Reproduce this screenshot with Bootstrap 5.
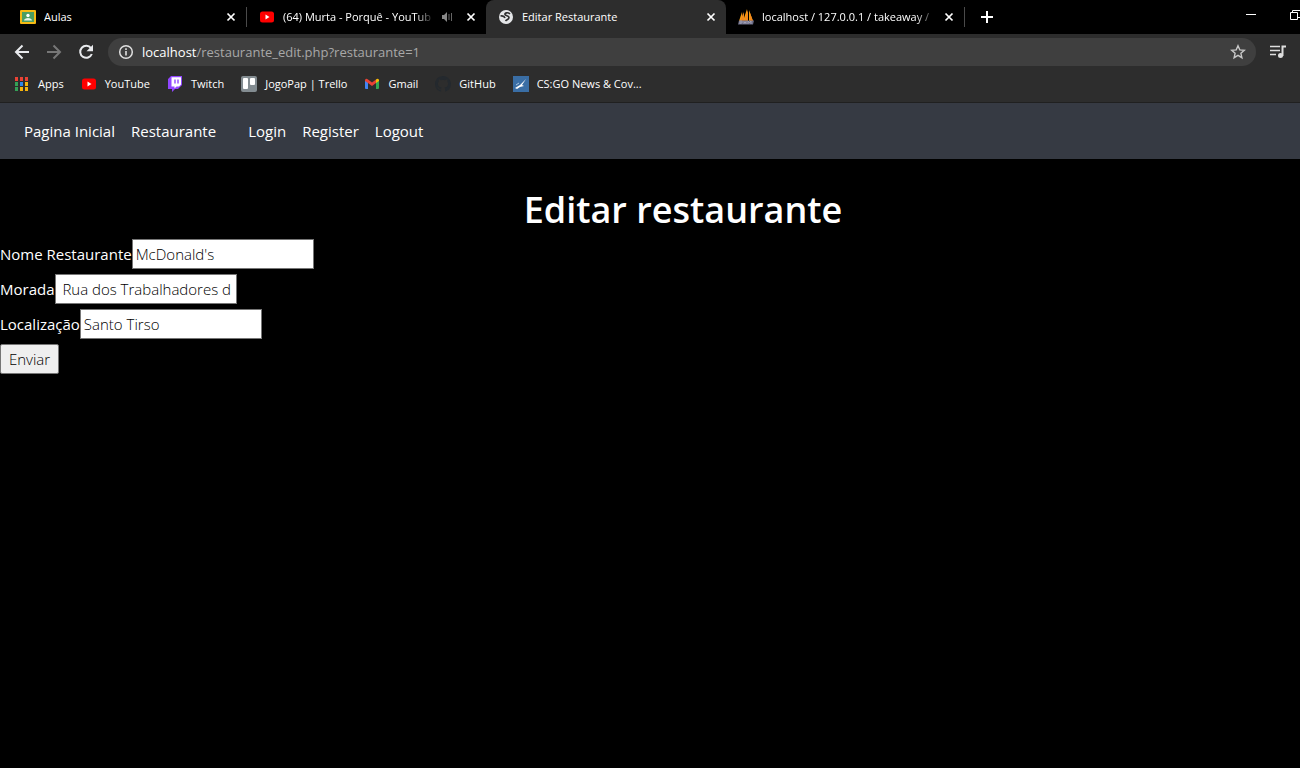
<!DOCTYPE html>
<html lang="pt">
<head>
<meta charset="utf-8">
<meta name="viewport" content="width=device-width, initial-scale=1">
<title>Editar Restaurante</title>
<link href="https://cdn.jsdelivr.net/npm/bootstrap@5.3.0/dist/css/bootstrap.min.css" rel="stylesheet">
<style>
body{background:#000;color:#fff;font-family:"Open Sans","Noto Sans",sans-serif;font-size:15px;overflow-x:hidden}
svg{display:block;flex:none}
.bare{background:none;border:0;padding:0;color:inherit}
.browser{background:#2d2d2d;border-bottom:1px solid #202020;font-size:11px;line-height:18px}
.tab-strip{background:#000;height:34px;overflow:hidden}
.tab-item{width:239px;height:34px;padding:0 10px 0 12px;gap:8px;flex:none}
.tab-item.first{width:247px;padding:0 0 0 20px}
.tab-item.last{padding-right:0}
.tab-item.active-tab{background:#2d2d2d;border-radius:8px 8px 0 0;width:240px}
.tab-title{flex:1 1 0;min-width:0;overflow:hidden;white-space:nowrap}
.fade-end{-webkit-mask-image:linear-gradient(90deg,#000 88%,transparent);mask-image:linear-gradient(90deg,#000 88%,transparent)}
.divider{width:1px;height:20px;background:#4a4a4a;margin-left:2px}
.toolbar-row{height:36px;padding:0 14px;gap:16px}
.omnibox{background:#3f3f3f;border-radius:14px;height:28px;padding:0 10px;gap:8px;margin:0 -2px}
.url-text{color:#a8a8a8;font-size:13px;white-space:nowrap}
.bookmarks{height:32px;padding:0 14px 4px;gap:17px}
.bookmarks a{color:#fff;text-decoration:none;gap:8px;flex:none;white-space:nowrap}
.site-nav{background:#363a43;height:56px;padding:0 16px}
.site-nav a{color:#fff;padding:8px;text-decoration:none}
.page-title{font-size:36px;font-weight:600;line-height:48px;margin:27px 0 5px;padding-left:66px}
.field-line{height:30px;margin-bottom:5px}
.field-line input{width:182px;height:30px;border:1px solid #767676;background:#fff;color:#000;padding:1px 3px;font-weight:300}
.send{width:59px;height:30px;border:1px solid #767676;border-radius:2px;background:#efefef;color:#000;padding:0;font-weight:300}
</style>
</head>
<body>
<svg width="0" height="0" class="position-absolute" aria-hidden="true">
<defs>
<symbol id="close" viewBox="0 0 10 10"><path d="M1.500 1.500l7 7m0-7l-7 7" stroke="#fff" stroke-width="1.700"/></symbol>
<symbol id="yt" viewBox="0 0 16 12"><rect x="1" y="0.500" width="14" height="11" rx="2.500" fill="#f00"/><path d="M6.500 3.500v5l4-2.500z" fill="#fff"/></symbol>
</defs>
</svg>
<header class="browser">
  <div class="tab-strip d-flex align-items-center">
    <div class="tab-item first d-flex align-items-center">
      <svg width="16" height="14" viewBox="0 0 16 14"><rect width="16" height="14" rx="1" fill="#f5ba14"/><rect x="2" y="2" width="12" height="10" fill="#4b9e62"/><circle cx="8" cy="5.500" r="1.700" fill="#fff"/><path d="M4 10.500c0-3.500 8-3.500 8 0z" fill="#e4f2e8"/></svg>
      <span class="tab-title">Aulas</span>
      <button class="bare" aria-label="Fechar Aulas"><svg width="10" height="10"><use href="#close"/></svg></button>
      <span class="divider"></span>
    </div>
    <div class="tab-item d-flex align-items-center">
      <svg width="16" height="12"><use href="#yt"/></svg>
      <span class="tab-title fade-end">(64) Murta - Porquê - YouTub</span>
      <svg width="12" height="10" viewBox="0 0 12 10"><path d="M0 3h2l3-3v10L2 7H0z" fill="#888"/><path d="M7 2v6M9.500 1v8" stroke="#666"/></svg>
      <button class="bare ms-1" aria-label="Fechar YouTube"><svg width="10" height="10"><use href="#close"/></svg></button>
    </div>
    <div class="tab-item active-tab d-flex align-items-center">
      <svg width="16" height="14" viewBox="0 0 16 14"><circle cx="8" cy="7" r="7" fill="#e4e6e8"/><path d="M12 4C10 2 6.500 2.800 7 4.500s4 .8 4 3-2.500 2-3.500 3.500M2.500 6c2.500-.5 4 .5 4.500 2" fill="none" stroke="#2d2d2d" stroke-width="1.600"/></svg>
      <span class="tab-title">Editar Restaurante</span>
      <button class="bare" aria-label="Fechar Editar Restaurante"><svg width="10" height="10"><use href="#close"/></svg></button>
    </div>
    <div class="tab-item last d-flex align-items-center">
      <svg width="16" height="16" viewBox="0 0 16 16"><path d="M1 12L4 3l1 9zM5 12L9 0l1 12zM11 12V1l4 11z" fill="#f89c0e"/><path d="M2 12l4-9v9zM6 12l4-11v11zM12 12V4l3 8z" fill="#f28a1c"/><path d="M1 11.500h15l-1 4H0z" fill="#6c6c86"/><path d="M2 15v-3h2v2H2M6 15v-3M6 13.500h2M8 12v3M10 15v-3l1.500 2 1.500-2v3" fill="none" stroke="#aaaabc" stroke-width=".8"/></svg>
      <span class="tab-title fade-end">localhost / 127.0.0.1 / takeaway /</span>
      <button class="bare" aria-label="Fechar localhost"><svg width="10" height="10"><use href="#close"/></svg></button>
      <span class="divider"></span>
    </div>
    <button class="bare ms-3" aria-label="Novo separador"><svg width="12" height="12" viewBox="0 0 12 12"><path d="M6 0v12M0 6h12" stroke="#fff" stroke-width="2"/></svg></button>
    <div class="d-flex align-items-center ms-auto gap-4 pb-1">
      <button class="bare me-2" aria-label="Minimizar"><svg width="10" height="10" viewBox="0 0 10 10"><path d="M0 4.500h10" stroke="#fff"/></svg></button>
      <button class="bare" aria-label="Restaurar"><svg width="12" height="12" viewBox="0 0 12 12"><path d="M2.500 3.500h7v7h-7zM4.500 3V1.500H12M10 8.500h2" fill="none" stroke="#fff"/></svg></button>
    </div>
  </div>
  <div class="toolbar-row d-flex align-items-center">
    <button class="bare" aria-label="Anterior"><svg width="16" height="16" viewBox="0 0 16 16"><path d="M8.500 1.500L2 8l6.500 6.500M2 8h13" fill="none" stroke="#e8eaed" stroke-width="2"/></svg></button>
    <button class="bare" aria-label="Seguinte"><svg width="16" height="16" viewBox="0 0 16 16"><path d="M7.500 1.500L14 8l-6.500 6.500M14 8H1" fill="none" stroke="#777" stroke-width="2"/></svg></button>
    <button class="bare" aria-label="Recarregar"><svg width="16" height="16" viewBox="0 0 16 16"><path d="M13 4.200A6 6 0 1 0 13.800 10" fill="none" stroke="#e8eaed" stroke-width="2"/><path d="M15 .8v6.400H8.500z" fill="#e8eaed"/></svg></button>
    <div class="omnibox d-flex align-items-center flex-grow-1">
      <svg width="16" height="16" viewBox="0 0 16 16"><circle cx="8" cy="8" r="6.300" fill="none" stroke="#e0e0e0" stroke-width="1.500"/><path d="M8 7v4.500M8 4.300v1.600" stroke="#e0e0e0" stroke-width="1.600"/></svg>
      <span class="url-text flex-grow-1"><span class="text-white">localhost</span>/restaurante_edit.php?restaurante=1</span>
      <button class="bare" aria-label="Adicionar aos favoritos"><svg width="16" height="16" viewBox="0 0 16 16"><path d="M8 1.800l1.800 4.100 4.500.4-3.400 3 1 4.400L8 11.400l-3.900 2.300 1-4.400-3.400-3 4.500-.4z" fill="none" stroke="#c8c8c8" stroke-width="1.400"/></svg></button>
    </div>
    <button class="bare" aria-label="Controlos multimédia"><svg width="16" height="14" viewBox="0 0 16 14"><path d="M0 1.500h10M0 5.500h10M0 9.500h6" stroke="#dedede" stroke-width="1.700"/><circle cx="10.500" cy="10.500" r="2.500" fill="#dedede"/><path d="M12.500 11V1.500H16" fill="none" stroke="#dedede" stroke-width="2"/></svg></button>
  </div>
  <nav class="bookmarks d-flex align-items-center" aria-label="Favoritos">
    <a href="#" class="d-flex align-items-center"><svg width="16" height="14" viewBox="0 0 16 14"><path d="M1 0h3v4H1zM6 0h3v4H6zM11 0h3v4h-3z" fill="#ea4335"/><path d="M1 5h3v4H1zM1 10h3v4H1z" fill="#34a056"/><path d="M6 5h3v4H6z" fill="#2f86ea"/><path d="M11 5h3v4h-3zM6 10h3v4H6zM11 10h3v4h-3z" fill="#f6b40d"/></svg>Apps</a>
    <a href="#" class="d-flex align-items-center"><svg width="16" height="12"><use href="#yt"/></svg>YouTube</a>
    <a href="#" class="d-flex align-items-center"><svg width="16" height="16" viewBox="0 0 16 16"><path d="M4 0h11v9l-4 4H8l-3 3v-3H1V3z" fill="#9146ff"/><path d="M4.500 1.200H14v7.300l-2 2H9.500l-2 2v-2h-3z" fill="#fff"/><path d="M8 3.500v4M11 3.500v4" stroke="#9146ff" stroke-width="1.400"/></svg>Twitch</a>
    <a href="#" class="d-flex align-items-center"><svg width="16" height="16" viewBox="0 0 16 16"><rect width="16" height="16" rx="2" fill="#838c91"/><rect x="2" y="2" width="5" height="11" rx="1" fill="#fff"/><rect x="9" y="2" width="5" height="7" rx="1" fill="#fff"/></svg>JogoPap | Trello</a>
    <a href="#" class="d-flex align-items-center"><svg width="16" height="12" viewBox="0 0 16 12"><path d="M1 2l3 2v7H2q-1 0-1-1z" fill="#4285f4"/><path d="M12 4l3-2v8q0 1-1 1h-2z" fill="#34a853"/><path d="M1 3V2q1-2 3-.5L8 4.500l4-3V5L8 8 4 5z" fill="#ea4335"/><path d="M12 1.500Q14 0 15 2v1l-3 2z" fill="#fbbc04"/></svg>Gmail</a>
    <a href="#" class="d-flex align-items-center"><svg width="16" height="16" viewBox="0 0 16 16"><path fill="#24292e" d="M8 0C3.580 0 0 3.580 0 8c0 3.540 2.290 6.530 5.470 7.590.4.070.55-.17.55-.38v-1.490c-2.010.37-2.530-.49-2.690-.94-.09-.23-.48-.94-.82-1.130-.28-.15-.68-.52-.01-.53.63-.01 1.080.58 1.230.82.72 1.210 1.870.87 2.330.66.07-.52.28-.87.51-1.070-1.780-.2-3.640-.89-3.640-3.950 0-.87.31-1.590.82-2.150-.08-.2-.36-1.020.08-2.120 0 0 .67-.21 2.200.82a7.600 7.600 0 0 1 4 0c1.530-1.040 2.200-.82 2.200-.82.44 1.100.16 1.920.08 2.120.51.56.82 1.270.82 2.150 0 3.070-1.870 3.750-3.650 3.950.29.25.54.73.54 1.480v2.200c0 .21.150.46.550.38A8 8 0 0 0 8 0z"/></svg>GitHub</a>
    <a href="#" class="d-flex align-items-center"><svg width="16" height="16" viewBox="0 0 16 16"><rect width="16" height="16" fill="#3a6ea5"/><path d="M13 3L7 9 2 12l2 1 3-2 4-1-2-1z" fill="#fff"/><path d="M3 9l3-2" stroke="#a8c4e0"/></svg>CS:GO News &amp; Cov...</a>
  </nav>
</header>
<nav class="site-nav d-flex align-items-center" aria-label="Principal">
  <div class="d-flex me-3"><a href="#">Pagina Inicial</a><a href="#">Restaurante</a></div>
  <div class="d-flex"><a href="#">Login</a><a href="#">Register</a><a href="#">Logout</a></div>
</nav>
<main>
  <h1 class="page-title text-center">Editar restaurante</h1>
  <form>
    <div class="field-line d-flex align-items-center"><label for="nome">Nome Restaurante</label><input type="text" id="nome" value="McDonald's"></div>
    <div class="field-line d-flex align-items-center"><label for="morada">Morada</label><input type="text" id="morada" value=" Rua dos Trabalhadores d"></div>
    <div class="field-line d-flex align-items-center"><label for="local">Localização</label><input type="text" id="local" value="Santo Tirso"></div>
    <button type="button" class="send">Enviar</button>
  </form>
</main>
<script src="https://cdn.jsdelivr.net/npm/bootstrap@5.3.0/dist/js/bootstrap.bundle.min.js"></script>
</body>
</html>
